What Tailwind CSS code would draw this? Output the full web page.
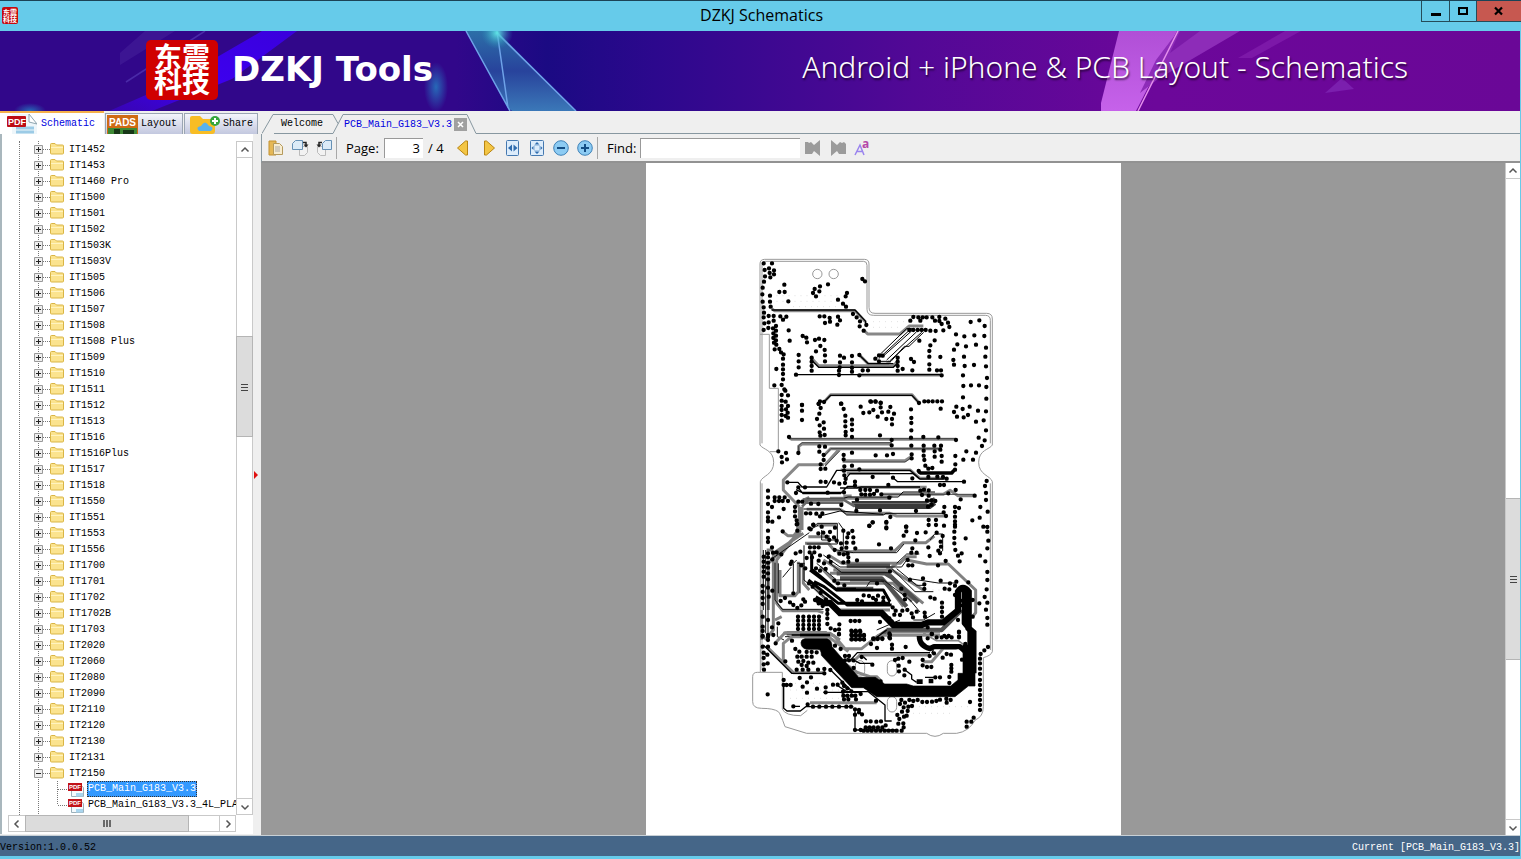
<!DOCTYPE html>
<html lang="en">
<head>
    <meta charset="utf-8">
    <title>DZKJ Schematics</title>
    <script src="https://cdn.jsdelivr.net/npm/@tailwindcss/browser@4"></script>
</head>
<body class="h-screen flex flex-col overflow-hidden bg-[#66cbea] font-['Liberation_Mono','Noto_Sans_CJK_SC',monospace] text-[10px] leading-4 text-black">

    <!-- Shared icons -->
    <svg class="hidden">
        <symbol id="folder" viewBox="0 0 14 14">
            <path d="M.5 2.5q0-1 1-1h3.5l1.5 1.5h6q1 0 1 1v7q0 1-1 1h-11q-1 0-1-1z" fill="#fbe38e" stroke="#d9b545"/>
            <path d="M1 5.5h12" stroke="#fff3bf"/>
        </symbol>
        <symbol id="pdf" viewBox="0 0 16 16">
            <path d="M3.500 2.500h7l5 4v9h-12z" fill="#f4fafd" stroke="#9bb0ba"/>
            <path d="M8 12h7v3.500h-7z" fill="#a9d5ee"/>
            <path d="M0 2h14v8h-14z" fill="#c11218"/>
            <text x="1" y="8" font-size="6" font-weight="bold" font-family="Liberation Sans, sans-serif" fill="#fff">PDF</text>
        </symbol>
        <symbol id="up" viewBox="0 0 10 10"><path d="M1.500 6.500L5 3l3.500 3.500" fill="none" stroke="#555" stroke-width="1.500"/></symbol>
        <symbol id="down" viewBox="0 0 10 10"><path d="M1.500 3.500L5 7l3.500-3.500" fill="none" stroke="#555" stroke-width="1.500"/></symbol>
    </svg>

    <!-- Title bar -->
    <header class="h-[31px] shrink-0 flex items-start border-t border-[#1b4356]">
        <div class="flex-1 pl-[2px] pt-1.5">
            <svg width="16" height="17" viewBox="0 0 16 17" class="overflow-visible">
                <rect width="16" height="17" rx="2" fill="#c5090d"/>
                <g font-family="Noto Sans CJK SC, sans-serif" font-size="7" font-weight="bold" fill="#fff">
                    <text x="1" y="8">东震</text>
                    <text x="1" y="15">科技</text>
                </g>
            </svg>
        </div>
        <h1 class="pt-[3px] font-['Open_Sans',sans-serif] text-[16px] leading-[22px]">DZKJ Schematics</h1>
        <div class="flex-1 flex justify-end">
            <button aria-label="Minimize" class="w-7 h-[21px] border-l border-b border-[#254b59] flex items-center justify-center">
                <svg width="12" height="12"><path d="M1 8h10v3h-10z"/></svg>
            </button>
            <button aria-label="Maximize" class="w-[27px] h-[21px] border-l border-b border-[#254b59] flex items-center justify-center">
                <svg width="12" height="12"><path d="M2 3h8v6h-8z" fill="none" stroke="#000" stroke-width="2"/></svg>
            </button>
            <button aria-label="Close" class="w-[45px] h-[21px] border-l border-b border-[#254b59] bg-[#c75850] flex items-center justify-center">
                <svg width="12" height="12"><path d="M2 2.500l7 7M9 2.500l-7 7" stroke="#000" stroke-width="2.200"/></svg>
            </button>
        </div>
    </header>

    <!-- Banner -->
    <section class="relative h-20 shrink-0 mr-px">
        <svg class="absolute inset-0 w-full h-full" viewBox="0 0 1520 80" preserveAspectRatio="none">
            <defs>
                <linearGradient id="sky"><stop offset="0" stop-color="#31078a"/><stop offset=".3" stop-color="#31078a"/><stop offset=".36" stop-color="#1b0a83"/><stop offset=".43" stop-color="#2c088d"/><stop offset=".6" stop-color="#520896"/><stop offset=".76" stop-color="#6c079a"/><stop offset="1" stop-color="#6a0797"/></linearGradient>
                <linearGradient id="beam" x1="1" y1="0" x2="0" y2="1"><stop offset="0" stop-color="#3a00dc"/><stop offset=".6" stop-color="#3d00f0"/><stop offset="1" stop-color="#3805b0"/></linearGradient>
                <linearGradient id="shard" x1="0" y1="0" x2="0" y2="1"><stop offset="0" stop-color="#2c6fa8"/><stop offset=".5" stop-color="#28439c"/><stop offset="1" stop-color="#3b78b8"/></linearGradient>
                <linearGradient id="pink" x1="0" y1="0" x2="0" y2="1"><stop offset="0" stop-color="#b04fd6"/><stop offset="1" stop-color="#c662ea"/></linearGradient>
                <radialGradient id="glow"><stop offset="0" stop-color="#2769b8"/><stop offset="1" stop-color="#2769b8" stop-opacity="0"/></radialGradient>
                <radialGradient id="spark"><stop offset="0" stop-color="#5fe3e6"/><stop offset="1" stop-color="#2a8fb8" stop-opacity="0"/></radialGradient>
            </defs>
            <path d="M0 0h1520v80h-1520z" fill="url(#sky)"/>
            <path d="M262 0h35L232 48l-80 32h-43l60-26z" fill="url(#beam)"/>
            <path d="M175 0h-30L120 22v12z" fill="#44209a" opacity=".6"/>
            <path d="M205 0L126 51" stroke="#4a2aa8" stroke-width="1.500"/>
            <ellipse cx="436" cy="56" rx="12" ry="25" fill="url(#glow)"/>
            <ellipse cx="30" cy="80" rx="16" ry="8" fill="url(#glow)"/>
            <path d="M466 0h31l13 80z" fill="url(#shard)"/>
            <path d="M497 0l11 77 4 3h64z" fill="url(#shard)"/>
            <path d="M466 0l44 80M497 0l11 77M497 2l79 78" stroke="#6ea2e8" fill="none" stroke-width="1.500"/>
            <circle cx="497" cy="2" r="16" fill="url(#spark)"/>
            <path d="M1119 0h58l-41 80h-35v-8z" fill="url(#pink)"/>
            <path d="M1178 0h62L1158 48l-18 14 16-33z" fill="#8d2cb8"/>
            <path d="M1180 0h20l-30 22z" fill="#7b1aa8"/>
            <path d="M1178 0l-40 80" stroke="#e58fec" stroke-width="1.500"/>
            <path d="M1285 0h16L1252 27h-14z" fill="#7c18a8"/>
            <path d="M1325 62l17-15 12 11z" fill="#7b1fae"/>
        </svg>
        <div class="relative h-full flex items-center justify-between pl-[146px] pr-28 text-white">
            <div class="flex items-center gap-3.5 pb-0.5">
                <svg width="72" height="60" viewBox="0 0 72 60" class="overflow-visible">
                    <rect width="72" height="60" rx="5" fill="#d00000"/>
                    <g font-family="Noto Sans CJK SC, sans-serif" font-size="28" font-weight="bold" fill="#fff">
                        <text x="8" y="28">东震</text>
                        <text x="8" y="53">科技</text>
                    </g>
                </svg>
                <strong class="pb-0.5 font-['DejaVu_Sans',sans-serif] text-[34px] leading-10">DZKJ Tools</strong>
            </div>
            <p class="pb-2 font-['Noto_Sans',sans-serif] font-light text-[30px] leading-10 whitespace-nowrap text-shadow-[1px_2px_2px_rgb(0_0_0/0.6)]">Android + iPhone &amp; PCB Layout - Schematics</p>
        </div>
    </section>

    <div class="flex-1 min-h-0 flex mr-px bg-[#efefef]">

        <!-- Left panel -->
        <aside class="w-[261px] shrink-0 flex flex-col pb-px">
            <div role="tablist" class="h-[23px] shrink-0 flex items-end gap-px text-[10px]">
                <button role="tab" aria-selected="true" class="w-[104px] h-[23px] flex items-center gap-1 pl-[7px] bg-white border-t-2 border-[#f5b04a] text-[#0000e0]">
                    <svg width="30" height="20" viewBox="0 0 30 20">
                        <path d="M5 0h17l8 9v11h-25z" fill="#eef6fa"/><path d="M22 0v8l8 2z" fill="#fff" stroke="#8fa6b0"/>
                        <path d="M9 14h18M9 18h18" stroke="#9ccbe6" stroke-width="3"/>
                        <rect x="0" y="2" width="19" height="11" rx="1" fill="#bd0d15"/>
                        <text x="1" y="11" font-size="9" font-weight="bold" font-family="Liberation Sans, sans-serif" fill="#fff">PDF</text>
                    </svg>
                    Schematic
                </button>
                <button role="tab" class="w-[78px] h-[21px] flex items-center gap-[3px] border border-b-0 border-[#9aa5b3] bg-linear-to-b from-[#f4f5fb] to-[#c3c8df] pl-px">
                    <svg width="31" height="19" viewBox="0 0 31 19" class="shrink-0">
                        <path d="M0 0h31v19h-31z" fill="#cf6a14"/><path d="M1 13h29v6h-29z" fill="#3f8a35"/><path d="M7 14h6v5h-6zM16 15h11v4h-11z" fill="#183818"/>
                        <text x="2" y="11" font-size="10" font-weight="bold" font-family="Liberation Sans, sans-serif" fill="#fff">PADS</text>
                    </svg>
                    Layout
                </button>
                <button role="tab" class="w-[74px] h-[21px] flex items-center gap-[3px] border border-b-0 border-[#9aa5b3] bg-linear-to-b from-[#f4f5fb] to-[#c3c8df] pl-1">
                    <svg width="31" height="19" viewBox="0 0 31 19" class="shrink-0">
                        <path d="M1 3q0-2 2-2h8l3 3h10q2 0 2 2v10q0 3-3 3h-19q-3 0-3-3z" fill="#f8bd24"/>
                        <path d="M10 16q-4-4 2-5 4-7 8 0 6 1 2 5z" fill="#5ab2ec"/>
                        <circle cx="26" cy="6" r="5" fill="#35a63c"/><path d="M26 3v6M23 6h6" stroke="#fff" stroke-width="2"/>
                    </svg>
                    Share
                </button>
            </div>

            <div class="flex-1 min-h-0 flex">
                <div class="flex-1 min-w-0 flex flex-col bg-white border-l-2 border-[#a9b7bd] pt-[7px] pb-[2px] pl-1.5">
                    <div class="flex-1 min-h-0 flex">
                        <nav class="flex-1 min-w-0 overflow-hidden">
                            <ul id="tree" class="ml-[11px] border-l border-dotted border-[#777]"></ul>
                        </nav>
                        <!-- Vertical scrollbar -->
                        <div class="w-[17px] shrink-0 flex flex-col border border-[#c9c9c9]">
                            <button aria-label="Scroll up" class="h-4 shrink-0 border-b border-[#c9c9c9] flex items-center justify-center"><svg width="10" height="10"><use href="#up"/></svg></button>
                            <div class="grow-[179] basis-0"></div>
                            <div class="grow-[99] basis-0 -mx-px border border-[#b5b5b5] bg-[#dcdcdc] flex items-center justify-center"><svg width="7" height="8"><path d="M0 1.500h7M0 4.500h7M0 7.500h7" stroke="#444"/></svg></div>
                            <div class="grow-[362] basis-0"></div>
                            <button aria-label="Scroll down" class="h-4 shrink-0 border-t border-[#c9c9c9] flex items-center justify-center"><svg width="10" height="10"><use href="#down"/></svg></button>
                        </div>
                    </div>
                    <!-- Horizontal scrollbar -->
                    <div class="h-[17px] shrink-0 mr-[17px] flex border border-[#c9c9c9]">
                        <button aria-label="Scroll left" class="w-4 shrink-0 flex items-center justify-center"><svg width="10" height="10" class="-rotate-90"><use href="#up"/></svg></button>
                        <div class="grow-[164] basis-0 -my-px border border-[#b5b5b5] bg-[#dcdcdc] flex items-center justify-center"><svg width="8" height="7"><path d="M1 0v7M4 0v7M7 0v7" stroke="#444" stroke-width="1.500"/></svg></div>
                        <div class="grow-[30] basis-0"></div>
                        <button aria-label="Scroll right" class="w-4 shrink-0 border-l border-[#c9c9c9] flex items-center justify-center"><svg width="10" height="10" class="rotate-90"><use href="#up"/></svg></button>
                    </div>
                </div>
                <!-- Splitter -->
                <div class="w-2 shrink-0 flex items-center">
                    <svg width="8" height="28"><path d="M1 1l4 4-4 4z" fill="#e01010"/></svg>
                </div>
            </div>
        </aside>

        <!-- Viewer -->
        <main class="flex-1 min-w-0 flex flex-col">
            <div role="tablist" class="h-[23px] shrink-0 flex items-end text-[10px] pl-px">
                <svg width="12" height="20" class="shrink-0"><path d="M0 19.500L11 .5h1" fill="none" stroke="#8797a0"/></svg>
                <button role="tab" class="h-5 w-[59px] pl-[7px] text-left border-y border-[#8797a0]">Welcome</button>
                <svg width="11" height="20" class="shrink-0"><path d="M0 .5l5 9M0 19.500L10 .5h1" fill="none" stroke="#8797a0"/></svg>
                <div class="h-5 flex items-center gap-0.5 border-t border-[#8797a0] text-[#0000e0]">
                    <button role="tab" aria-selected="true">PCB_Main_G183_V3.3</button>
                    <button aria-label="Close tab" class="w-[13px] h-[13px] bg-[#a0a0a0] flex items-center justify-center"><svg width="7" height="7"><path d="M1 1l5 5M6 1l-5 5" stroke="#fff" stroke-width="1.500"/></svg></button>
                </div>
                <svg width="10" height="20" class="shrink-0"><path d="M0 .5L9 19.500h1" fill="none" stroke="#8797a0"/></svg>
                <div class="flex-1 border-b border-[#8797a0]"></div>
            </div>

            <!-- Toolbar -->
            <div class="h-[29px] shrink-0 flex items-center border-b-2 border-l border-b-[#929292] border-l-[#8b9ba3] pl-1.5 font-['Open_Sans',sans-serif] text-[13px]">
                <button aria-label="Open" class="w-6"><svg width="16" height="16">
                    <path d="M1 1h7v14h-7z" fill="#e5b856" stroke="#c39130"/><path d="M5.500 3.500h6l3 3v8h-9z" fill="#f7ecd0" stroke="#b59a5c"/><path d="M7 7h5M7 9h5M7 11h5" stroke="#aaa"/>
                </svg></button>
                <button aria-label="Rotate right" class="w-6"><svg width="17" height="16">
                    <path d="M7.500 6.500h8v6l-3 3h-5z" fill="#f2f2f2" stroke="#bbb"/><path d="M3.500 .5h7v9h-10v-6z" fill="#dcebf7" stroke="#6791b5"/><path d="M11 2.500h3v3" fill="none" stroke="#222" stroke-width="1.500"/><path d="M11.500 4.500h5l-2.500 3z" fill="#222"/>
                </svg></button>
                <button aria-label="Rotate left" class="w-5"><svg width="17" height="16">
                    <path d="M1.500 6.500h8v9h-5l-3-3z" fill="#f2f2f2" stroke="#bbb"/><path d="M9.500 .5h6v9h-9v-6z" fill="#dcebf7" stroke="#6791b5"/><path d="M6 2.500h-3v3" fill="none" stroke="#222" stroke-width="1.500"/><path d="M.5 4.500h5l-2.500 3z" fill="#222"/>
                </svg></button>
                <div class="h-[22px] w-px bg-[#a8a8a8] mr-[9px]"></div>
                <label for="page" class="w-[38px]">Page:</label>
                <input id="page" value="3" class="w-[39px] h-5 pr-[3px] bg-white border-l border-t border-[#999] text-right">
                <span class="w-8 pl-[5px] whitespace-nowrap">/ 4</span>
                <button aria-label="Previous page" class="w-[26px]"><svg width="16" height="16"><path d="M12.500 1v14h-2l-8-7 8-7z" fill="#f3c544" stroke="#b98512"/></svg></button>
                <button aria-label="Next page" class="w-6"><svg width="16" height="16"><path d="M3.500 1v14h2l8-7-8-7z" fill="#f3c544" stroke="#b98512"/></svg></button>
                <button aria-label="Fit width" class="w-6"><svg width="16" height="16"><rect x="1.500" y=".5" width="12" height="15" rx="1" fill="#dcecfb" stroke="#4478b0"/><path d="M7 4.500v7l-4-3.500zM8.500 4.500v7l4-3.500z" fill="#2f6cae"/></svg></button>
                <button aria-label="Fit page" class="w-6"><svg width="16" height="16"><rect x="1.500" y=".5" width="13" height="15" rx="1" fill="#dcecfb" stroke="#4478b0"/><path d="M8 2l2.500 2.500h-5zM8 14l2.500-2.500h-5zM2.500 8l2-2v4zM13.500 8l-2-2v4z" fill="#2f6cae"/><path d="M5.500 5.500h5v5h-5z" fill="none" stroke="#7ba6d2" stroke-dasharray="1 1"/></svg></button>
                <button aria-label="Zoom out" class="w-6"><svg width="16" height="16"><circle cx="8" cy="8" r="7.300" fill="#8ccbf3" stroke="#3f82b8"/><path d="M4 8h8" stroke="#134d84" stroke-width="2"/></svg></button>
                <button aria-label="Zoom in" class="w-5"><svg width="16" height="16"><circle cx="8" cy="8" r="7.300" fill="#8ccbf3" stroke="#3f82b8"/><path d="M4 8h8M8 4v8" stroke="#134d84" stroke-width="2"/></svg></button>
                <div class="h-[22px] w-px bg-[#a8a8a8] mr-[9px]"></div>
                <label for="find" class="w-[33px]">Find:</label>
                <input id="find" class="w-40 h-5 px-1 bg-white border-l border-t border-[#999]">
                <button aria-label="Find previous" class="w-[25px] pl-[5px]"><svg width="16" height="16"><path d="M0 2h3l1 1 2-1 3 3 6-5v16l-6-5-2 3h-7z" fill="#9b9b9b"/></svg></button>
                <button aria-label="Find next" class="w-[25px] pl-[5px]"><svg width="16" height="16"><path d="M16 14v-10l-2-2-2 1-2-1-3 3-6-5v16l6-5 2 3z" fill="#9b9b9b"/></svg></button>
                <button aria-label="Match case" class="w-6 pl-1"><svg width="16" height="16" class="overflow-visible"><path d="M1 15l5-10 4 10M3 11.500h6" fill="none" stroke="#9a84ee" stroke-width="1.500"/><text x="8" y="8" font-size="12" font-weight="bold" font-family="Open Sans, sans-serif" fill="#b546a8">a</text></svg></button>
            </div>

            <div class="flex-1 min-h-0 flex bg-[#999]">
                <div class="flex-1 flex justify-center overflow-hidden">
                    <div class="w-[475px] bg-white pl-[94px] pt-[87px]">
                        <!-- Board layer, 3 units per pixel -->
                        <svg width="270" height="500" viewBox="0 0 810 1500" fill="none" stroke="#000" stroke-linejoin="round">
                            <g stroke="#999" stroke-width="3">
                                <path d="M60 585V42q0-14 14-14H373q14 0 14 14V172q0 18 18 18H740q17 0 17 17V585c-8 14-41 14-41 52s36 40 41 58V1205q-4 12-27 18V1370q0 30-24 40-20 35-56 40H610q-25 18-50 0H200l-65-20q-14-40-20-45-14-10-50-10-27 0-27-20V1280q0-13 14-13h9V695c5-18 40-20 40-58s-33-38-41-52z"/>
                                <path d="M66 580V44q0-10 10-10H371q10 0 10 12V178q0 18 20 18H736q15 0 15 15V580M751 700V1200M66 1260V700M60 253h28v162h27v190h-25M61 1267h66v110q8 20 55 20l20-16"/>
                                <circle cx="232" cy="72" r="14"/><circle cx="281" cy="72" r="14"/>
                                <rect x="346" y="1232" width="28" height="46" rx="14"/><rect x="442" y="1232" width="28" height="46" rx="14"/><rect x="442" y="1340" width="28" height="46" rx="14"/>
                            </g>
                            <g stroke="#bbb" stroke-width="2" stroke-dasharray="2 16">
                                <path d="M110 137H300M110 154H290M160 170H300M400 215H500M400 232H490M150 1320H340M150 1345H340M520 1370H690M520 1390H640M130 1300H350M560 1020H680M560 1000H640"/>
                            </g>

                            <!-- Upper traces -->
                            <g stroke="#888" stroke-width="9">
                                <path d="M95 176l8 6H345l32 34M371 240l12 12H480l28-24H550M212 322l24 25H460l14-14M360 317l25 25H440l10-8M252 456l20-22H516l22 26M360 375H605"/>
                                <path d="M176 609v-20l10-7H455M250 618l22-22H600M255 645l45-50M252 644h-76l-46 46v30l48 50M308 632H495l18-12M147 562l8 6H648"/>
                                <path d="M302 660H510l30 25H610M320 670H450M270 745h170l16-8M350 712H560M425 733H610l20-12 12 8 12 8H704M190 750l18-8M200 778H300l20 12H450l20 8H615M310 738h25"/>
                            </g>
                            <g stroke="#000" stroke-width="4">
                                <path d="M95 180H345l32 34v12M212 328l24 24H460l14-14M168 374H605M252 456l20-20H516l22 24M360 317l25 24H460"/>
                                <path d="M405 328l95-92h20M416 326l95-88M428 320l90-80M440 330l90-85M450 332l95-85M418 334h35l40-45h14l44-42" stroke-width="3"/>
                                <path d="M142 697h32l12 14H260l30-50H510l30 26H614M318 685l12-14H520l18 15M175 713l14 18h112l22-22h24M300 714h50l14-3H540M459 683l14 12H672M310 727H185l-17-8"/>
                                <path d="M147 566H648M176 609v-22l10-9H455M250 622l22-26H600M255 648l45-46M308 636H495l18-12M425 733H704" stroke="#444" stroke-width="3"/>
                                <path d="M200 745h110l14-4H475l14-15H585M190 777h110l20 18H430l8-5H615M240 798l60-15 130 10" stroke-width="3"/>
                                <path d="M536 665l6 4H635l7-8" stroke-width="11"/>
                                <path d="M335 757H560l24-12M340 766H565l20-12M345 773H570l16-12" stroke="#3a3a3a" stroke-width="8"/>
                                <path d="M188 749H310l34 20M194 757l10-8M178 770v70M186 770l12-12H310" stroke="#666" stroke-width="8"/>
                            </g>

                            <!-- Middle traces -->
                            <g transform="translate(0 810)">
                                <g stroke="#808080" stroke-width="9">
                                    <path d="M178-40V38L85 130V270M186-40V30M182 30L110 120V250l18 22H230l20 6M100 230V100L190 40M195 70h70l15 18M205 50H270M230 15H290M128 35l15 12h18l12-14V0M175 125v90l-10 12H120V150M190 130v60l18 20M75 360l25-30V200M65 270V360"/>
                                    <path d="M290 95h50l4-3H465l25-24h68l25-20M265 105l40 25H480l20-20h30M250 120l50 30H440l30-18M280 150H440l75 95M240 140l50 50H460l30 30M210 190l80 80H450M270 160H440l110 90M440 140l110 70M500 120l60 12h65l82 78v68l-10 12M330 180H430l60 80M100 90h-20M105 300l20-10M130 340h140l30 20"/>
                                </g>
                                <g stroke="#505050" stroke-width="13"><path d="M320 137H450M290 160H435l20 12 80 75M300 175H425l75 85M290 207H400M440 330H605l60-60M400 360l45-30M140 340H260"/></g>
                                <g stroke="#111" stroke-width="3">
                                    <path d="M105 128V240l22 28H250M115 130V220M90 120L208 38M192 76V180l110 92M200 72h92V10h-60l-20 20M212 28l22-12M296 8l14 20v52M245 30v30h40M280 88l60 10H470l22-26M250 105l50 36H485l20-28M270 130l35 28H450M230 130l60 50H430l80 60 30 36M455 145l70 70h55M470 146l60 50h25M515 177l80 12h50M380 200l10-16H432M70 90v180M77 90v250M84 180v170M172 130h22M160 215V130l10-10M180 130v90M128 172l25-30M570 60l14-18h24v50l-12 10M112 320v30l20 10M538 102H500l-30 28M410 330l70-30M520 300h30l35-20M135 350h120l18-10"/>
                                </g>
                                <path d="M215 100v50M210 150l80 60H430l20 35M205 180l90 70H450M222 185l30 15 70 55H455M218 150l70 58h60" stroke-width="9"/>
                                <path d="M225 235l25 14h20l30 30H425l35 36h85l20-8h45l44-36V215q14-22 32 0V325l14 12V460" stroke-width="19" stroke-linejoin="miter"/>
                                <path d="M672 210v100l17 20v50" stroke-width="14"/>
                            </g>

                            <!-- Lower traces -->
                            <g transform="translate(0 1140)">
                                <g stroke="#888" stroke-width="9">
                                    <path d="M105 40l30-32H255l28 10 32 38h50l50-40H600M80 50l80 78h95M130 95V40l25-20H265l60 45M340 95l20-20H570M300 90l55 40M550 95h25l35-40h40M330 120l60 20h20l12 12M210 218H410"/>
                                    <path d="M440 8H600M550 10l40 22h65l20 15" stroke-width="5"/>
                                </g>
                                <path d="M320 85l12 5 20-22H570M575 70l5-10M70 45l10 10 75 75h100M250 187H360M131 165v70l10 8h40l16-13H340M160 229h20M290 165l30 20h65l50 40v48h20M345 240v60H470M340 90l20 10h35M370 80l10 10M495 120l20 15v12l15 10M555 142h30M272 120l60 60M400 30l40-30M155 15h100" stroke-width="4"/>
                                <path d="M180 15H270" stroke-width="8"/>
                                <path d="M183 38q0-10 12-12H262q14 4 14 24l80 92h50l28 20H500l20 6H632l22-18V130h15V45h36V168H685l-40 32H410l-40-27H335L244 76q0-18-10-18H200q-17-4-17-20z" fill="#000" stroke-width="2"/>
                                <path d="M538 18q0 30 32 38l12-6H660l22 20V100" stroke-width="16"/>
                                <path d="M530 155h18M566 153h14" stroke-width="14"/>
                            </g>

                            <!-- Vias -->
                            <g stroke-width="13" stroke-linecap="round">
                                <path d="M71 40h0M96 40h0M74 60h0M87 55h0M102 61h0M89 69h0M102 73h0M75 79h0M91 82h0M72 95h0M68 113h0M67 133h0M90 137h0M68 155h0M90 155h0M71 172h0M92 170h0M72 188h0M86 198h0M101 198h0M71 202h0M73 220h0M86 217h0M71 240h0M85 234h0M101 212h0M108 228h0M99 235h0M108 242h0M100 250h0M108 257h0M100 264h0M108 271h0M102 278h0M109 284h0M104 298h0M118 297h0M123 307h0M131 313h0M129 326h0M129 344h0M129 358h0M129 372h0M129 388h0M125 405h0M133 418h0M103 406h0M109 357h0M133 104h0M118 126h0M134 126h0M145 154h0M121 199h0M139 200h0M129 209h0M146 241h0M149 272h0M264 103h0M240 109h0M224 117h0M238 124h0M219 129h0M228 139h0M367 87h0M375 94h0M321 129h0M317 139h0M294 149h0M309 161h0M318 170h0M339 192h0M239 199h0M253 199h0M269 204h0M270 215h0M255 219h0M294 200h0M300 211h0M292 224h0M350 202h0M360 214h0M359 229h0M371 242h0M379 225h0M188 258h0M199 263h0M201 277h0M225 270h0M237 266h0M253 270h0M241 288h0M228 304h0M254 300h0M255 316h0M255 334h0M176 315h0M176 334h0M176 352h0M215 323h0M215 335h0M215 348h0M215 362h0M300 317h0M312 323h0M300 337h0M299 352h0M336 318h0M336 337h0M336 353h0M336 365h0M297 362h0M297 375h0M168 374h0M358 376h0M358 315h0M368 361h0M384 361h0M406 326h0M417 316h0M428 317h0M417 334h0M473 323h0M473 335h0M473 348h0M473 362h0M488 357h0M513 327h0M522 336h0M517 361h0"/>
                                <path d="M511 212h0M520 201h0M535 202h0M541 212h0M548 202h0M560 202h0M577 202h0M585 212h0M598 201h0M598 213h0M616 206h0M605 222h0M624 218h0M628 231h0M508 240h0M520 240h0M533 240h0M545 240h0M557 240h0M571 242h0M587 243h0M610 241h0M538 272h0M584 271h0M571 286h0M568 303h0M568 320h0M568 343h0M568 359h0M591 361h0M603 361h0M605 376h0M601 321h0M692 216h0M718 211h0M734 228h0M648 253h0M673 259h0M703 256h0M733 258h0M652 283h0M642 299h0M678 289h0M708 284h0M738 293h0M640 330h0M642 344h0M672 320h0M674 348h0M702 345h0M736 320h0M738 349h0M669 376h0M741 384h0M670 408h0M693 406h0M717 406h0M739 411h0M669 442h0M739 446h0M553 454h0M565 454h0M578 454h0M592 454h0M606 454h0M537 459h0M252 456h0M236 461h0M304 461h0M186 465h0M391 454h0M406 454h0M422 458h0"/>
                                <g transform="translate(0 450)">
                                    <path d="M125 -15h0M136 -28h0M144 -14h0M125 2h0M137 5h0M144 18h0M125 18h0M138 28h0M125 30h0M125 45h0M143 38h0M137 48h0M144 53h0M125 62h0M186 15h0M186 32h0M186 60h0M240 4h0M236 12h0M242 24h0M238 41h0M231 57h0M251 67h0M239 76h0M252 86h0M239 97h0M254 105h0M241 107h0M303 11h0M311 27h0M316 47h0M316 64h0M316 79h0M317 96h0M317 106h0M336 59h0M336 73h0M336 90h0M336 111h0M362 20h0M370 39h0M388 37h0M400 30h0M393 5h0M407 5h0M422 9h0M422 22h0M426 37h0M451 21h0M445 35h0M462 41h0M413 50h0M439 57h0M456 57h0M456 73h0M513 28h0M514 54h0M514 69h0M514 91h0M513 113h0M602 26h0M649 20h0M668 27h0M689 20h0M642 36h0M684 45h0M651 50h0M671 52h0M714 32h0M738 34h0M708 65h0M731 61h0M738 91h0M716 113h0M734 121h0M726 138h0M420 106h0M455 120h0M455 136h0M147 111h0M550 111h0M595 112h0M648 120h0M514 137h0M551 137h0M583 137h0M603 137h0M601 149h0M551 152h0M584 154h0M605 168h0M584 170h0M605 185h0M551 167h0M553 180h0M556 197h0M565 206h0M577 204h0M646 168h0M646 193h0M670 179h0M679 154h0M699 179h0M708 158h0M407 166h0M441 166h0M459 162h0M515 163h0M515 175h0M115 154h0M138 159h0M125 171h0M141 178h0M126 187h0M175 159h0M238 139h0M255 140h0M238 155h0M251 165h0M251 180h0M242 193h0M242 207h0M256 206h0M336 158h0M311 165h0M311 178h0M336 197h0M358 208h0M313 199h0M312 212h0M313 226h0M317 237h0M315 249h0M536 213h0M645 209h0M398 231h0M459 233h0M517 235h0M565 231h0M592 230h0M609 231h0M620 236h0M142 247h0M242 245h0M257 246h0M282 247h0M298 251h0M345 245h0M345 257h0M672 245h0M740 243h0M600 255h0M612 255h0M445 255h0"/>
                                    <path d="M175 262h0M195 262h0M84 272h0M168 279h0M84 292h0M104 292h0M118 292h0M134 292h0M104 303h0M117 303h0M128 303h0M144 303h0M175 305h0M187 305h0M213 311h0M235 312h0M84 312h0M96 321h0M165 321h0M165 334h0M131 327h0M84 337h0M84 352h0M117 352h0M165 349h0M170 361h0M84 364h0M97 365h0M170 373h0M263 278h0M312 277h0M361 270h0M376 270h0M390 270h0M411 272h0M364 283h0M376 284h0M390 284h0M402 282h0M424 283h0M448 293h0M351 299h0M304 315h0M349 333h0M420 331h0M451 351h0M541 272h0M552 269h0M566 271h0M546 285h0M566 287h0M625 280h0M647 270h0M704 287h0M662 298h0M561 301h0M574 301h0M586 303h0M575 314h0M564 320h0M528 333h0M613 321h0M611 337h0M618 348h0M645 321h0M657 324h0M645 336h0M645 350h0M645 374h0M721 321h0M743 335h0M719 353h0M697 361h0M738 279h0M735 258h0M738 300h0M566 360h0M588 360h0M566 375h0M588 375h0M499 380h0M439 368h0M398 367h0M388 378h0M439 382h0M612 377h0M742 381h0M198 340h0M211 340h0M229 341h0M240 349h0M247 340h0M220 374h0M285 383h0M208 385h0M730 380h0"/>
                                </g>
                                <g transform="translate(0 810)">
                                    <path d="M84 3h0M84 32h0M84 54h0M84 66h0M96 82h0M84 100h0M99 98h0M110 97h0M124 103h0M71 110h0M84 112h0M97 118h0M71 125h0M84 128h0M71 140h0M84 143h0M71 155h0M84 160h0M71 170h0M84 178h0M68 198h0M84 203h0M68 216h0M97 212h0M68 234h0M86 230h0M68 252h0M68 290h0M84 300h0M68 320h0M96 322h0M68 348h0M84 350h0M115 310h0M128 34h0M172 32h0M172 12h0M212 28h0M220 15h0M245 20h0M235 40h0M250 38h0M260 50h0M270 36h0M282 52h0M290 62h0M303 70h0M268 60h0M310 32h0M325 40h0M337 33h0M322 52h0M340 52h0M320 68h0M340 68h0M346 85h0M319 83h0M305 85h0M284 90h0M298 101h0M311 103h0M323 101h0M210 82h0M223 82h0M236 82h0M209 97h0M223 97h0M240 106h0M216 112h0M236 122h0M252 130h0M200 114h0M181 95h0M167 100h0M155 125h0M152 132h0M184 136h0M196 145h0M228 145h0M240 152h0M257 147h0M266 110h0M272 126h0M310 127h0M325 125h0M351 121h0M325 112h0M283 182h0M294 190h0M313 196h0M207 190h0M218 200h0M160 220h0M242 219h0M258 238h0M122 243h0M135 234h0M150 247h0M160 255h0M172 264h0M184 256h0M195 245h0M190 238h0M225 240h0M236 250h0M248 258h0M262 270h0M262 282h0M262 295h0M262 312h0M388 17h0M398 7h0M439 6h0M439 25h0M417 73h0M453 85h0M498 20h0M499 34h0M491 47h0M531 39h0M557 37h0M526 61h0M565 82h0M569 108h0M590 38h0M608 48h0M602 65h0M603 80h0M595 92h0M600 100h0M517 85h0M514 98h0M530 98h0M503 120h0M505 136h0M517 136h0M594 136h0M617 123h0M643 35h0M643 54h0M643 70h0M646 90h0M665 100h0M654 107h0M659 124h0M677 55h0M645 20h0M645 4h0M720 107h0M736 124h0M742 35h0M745 62h0M742 85h0M742 156h0M742 180h0M740 208h0M734 231h0M742 248h0M738 269h0M742 294h0M742 314h0M718 250h0M698 240h0M698 290h0M685 187h0M649 185h0M630 190h0M645 197h0M602 182h0M614 206h0M628 208h0M645 225h0M450 154h0M510 179h0M549 175h0M553 193h0M553 207h0M484 206h0M411 190h0M571 232h0M584 236h0M494 225h0M495 238h0M371 226h0M387 228h0M399 234h0M414 227h0M408 240h0M430 233h0M352 240h0M366 244h0M430 245h0M458 262h0M467 272h0M463 284h0M480 285h0M487 272h0M502 270h0M515 280h0M530 275h0M519 292h0M554 278h0M555 290h0M606 248h0M606 262h0M606 276h0M606 290h0M668 242h0M668 256h0M654 300h0M563 322h0M575 342h0M448 295h0M455 304h0M420 306h0M450 345h0M450 355h0M590 352h0M605 352h0M620 352h0M635 352h0M657 337h0M657 352h0"/>
                                    <path d="M174 290h0M190 290h0M207 290h0M222 290h0M237 290h0M174 302h0M190 302h0M207 302h0M222 302h0M237 302h0M174 315h0M190 315h0M207 315h0M222 315h0M237 315h0M174 327h0M190 327h0M207 327h0M222 327h0M237 327h0M332 303h0M345 303h0M358 303h0M272 325h0M285 330h0M298 313h0M297 328h0M297 343h0M334 332h0M347 332h0M360 332h0M334 345h0M347 345h0M360 345h0M372 345h0M334 358h0M347 358h0M360 358h0M372 358h0M400 355h0M413 355h0M427 355h0"/>
                                </g>
                                <g transform="translate(0 1140)">
                                    <path d="M68 3h0M68 20h0M84 15h0M100 15h0M84 30h0M68 50h0M84 50h0M107 40h0M71 68h0M82 74h0M71 84h0M83 100h0M71 103h0M72 119h0M136 94h0M156 32h0M166 57h0M178 65h0M200 66h0M215 66h0M230 67h0M172 80h0M185 80h0M200 80h0M215 80h0M175 95h0M190 93h0M205 98h0M220 98h0M185 105h0M200 108h0M170 119h0M188 119h0M205 119h0M234 119h0M253 117h0M253 130h0M271 120h0M179 144h0M213 142h0M201 157h0M188 170h0M201 188h0M231 176h0M257 172h0M257 187h0M279 164h0M293 164h0M307 158h0M312 168h0M322 175h0M334 184h0M309 185h0M310 197h0M322 197h0M335 197h0M346 197h0M362 192h0M312 208h0M325 208h0M348 208h0M408 212h0M131 150h0M131 165h0M140 165h0M152 165h0M83 193h0M160 229h0M203 223h0M219 230h0M238 230h0M258 230h0M277 230h0M297 230h0M319 230h0M333 230h0M345 238h0M357 240h0M345 254h0M357 247h0M366 253h0M378 274h0M392 274h0M409 275h0M423 274h0M345 300h0M362 300h0M377 292h0M389 292h0M401 292h0M414 292h0M427 292h0M437 286h0M371 302h0M383 302h0M395 302h0M408 302h0M421 302h0M434 302h0M446 302h0M458 302h0M470 302h0M485 302h0M491 292h0M475 281h0M490 280h0M478 267h0M492 260h0M472 255h0M486 245h0M500 257h0M503 243h0M491 232h0M505 230h0M516 228h0M480 222h0M495 218h0M484 210h0M508 210h0M520 213h0M533 210h0M547 216h0M561 216h0M576 215h0M589 213h0M600 209h0M619 206h0M632 210h0M620 218h0M690 216h0M720 240h0M701 263h0M694 275h0M680 275h0M680 290h0M720 225h0M720 210h0M720 195h0M720 180h0M720 165h0M720 150h0M720 132h0M720 116h0M720 100h0M720 86h0M722 72h0M733 61h0M744 51h0M315 78h0M327 78h0M327 91h0M315 91h0M340 91h0M365 81h0M397 104h0M341 114h0M422 154h0M456 44h0M456 56h0M497 51h0M411 54h0M393 42h0M302 57h0M285 47h0M400 27h0M413 27h0M427 27h0M448 10h0M448 22h0M297 12h0M336 5h0M348 5h0M336 17h0M348 17h0M360 17h0M372 17h0M336 28h0M348 28h0M360 28h0M372 28h0M361 5h0M576 12h0M563 25h0M613 18h0M626 18h0M657 5h0M657 19h0M676 42h0M465 90h0M475 86h0M488 84h0M508 95h0M476 107h0M477 124h0M494 119h0M493 136h0M548 90h0M548 106h0M561 111h0M574 111h0M582 70h0M569 78h0M608 83h0M620 72h0M633 74h0M666 89h0M634 105h0M634 115h0M634 125h0M628 141h0M628 159h0M586 142h0M600 142h0"/>
                                </g>
                            </g>
                        </svg>
                    </div>
                </div>
                <!-- Page scrollbar -->
                <div class="w-[15px] flex flex-col bg-white border-l border-[#c9c9c9]">
                    <button aria-label="Scroll page up" class="h-4 shrink-0 border-b border-[#c9c9c9] flex items-center justify-center"><svg width="10" height="10"><use href="#up"/></svg></button>
                    <div class="grow-[321] basis-0"></div>
                    <div class="grow-[161] basis-0 border-y border-[#b5b5b5] bg-[#dcdcdc] flex items-center justify-center"><svg width="7" height="8"><path d="M0 1.500h7M0 4.500h7M0 7.500h7" stroke="#444"/></svg></div>
                    <div class="grow-[160] basis-0"></div>
                    <button aria-label="Scroll page down" class="h-4 shrink-0 border-t border-[#c9c9c9] flex items-center justify-center"><svg width="10" height="10"><use href="#down"/></svg></button>
                </div>
            </div>
        </main>
    </div>

    <!-- Status bar -->
    <footer class="h-[21px] shrink-0 mr-px mb-[3px] pt-1 flex items-center justify-between bg-[#456688] border-t border-[#c8d0d6]">
        <span>Version:1.0.0.52</span>
        <span class="text-white">Current [PCB_Main_G183_V3.3]</span>
    </footer>

    <script>
        const tree = document.getElementById('tree');
        const models = [
            'IT1452', 'IT1453', 'IT1460 Pro', 'IT1500', 'IT1501', 'IT1502', 'IT1503K', 'IT1503V', 'IT1505', 'IT1506',
            'IT1507', 'IT1508', 'IT1508 Plus', 'IT1509', 'IT1510', 'IT1511', 'IT1512', 'IT1513', 'IT1516', 'IT1516Plus',
            'IT1517', 'IT1518', 'IT1550', 'IT1551', 'IT1553', 'IT1556', 'IT1700', 'IT1701', 'IT1702', 'IT1702B',
            'IT1703', 'IT2020', 'IT2060', 'IT2080', 'IT2090', 'IT2110', 'IT2120', 'IT2130', 'IT2131', 'IT2150'
        ];
        const files = ['PCB_Main_G183_V3.3', 'PCB_Main_G183_V3.3_4L_PLA'];

        function addFolder(name) {
            const open = name === 'IT2150';
            const row = document.createElement('li');
            row.className = 'h-4 flex items-center whitespace-nowrap';
            row.innerHTML = `
                <svg width="30" height="16" class="ml-[14px] shrink-0" fill="none" stroke="#777">
                    <path d="M4.500 0v16M9 8.500h7" stroke-dasharray="1 1"/>
                    <path d="M.5 4.500h8v8h-8z" fill="#eee" stroke="#999"/>
                    <path d="${open ? 'M2 8.500h5' : 'M2 8.500h5M4.500 6v5'}" stroke="#222"/>
                    <use href="#folder" x="16" y="1" width="14" height="14"/>
                </svg>
                <a href="#" class="pl-[5px] pt-px">${name}</a>`;
            tree.appendChild(row);
        }

        function addFile(name, selected) {
            const row = document.createElement('li');
            row.className = 'h-4 flex items-center whitespace-nowrap';
            row.innerHTML = `
                <svg width="50" height="16" class="ml-[14px] shrink-0" fill="none" stroke="#777">
                    <path d="M4.500 0v16M23.500 0v${selected ? 16 : 8}M24 8.500h10" stroke-dasharray="1 1"/>
                    <use href="#pdf" x="34" y="0" width="16" height="16" stroke="none"/>
                </svg>
                <a href="#" class="${selected ? 'ml-[3px] h-4 px-px bg-[#3399ff] text-white outline-1 -outline-offset-1 outline-dotted outline-[#333]' : 'ml-[3px] px-px'}">${name}</a>`;
            tree.appendChild(row);
        }

        models.forEach(addFolder);
        files.forEach((name, i) => addFile(name, i === 0));
        addFolder('');
    </script>
</body>
</html>
